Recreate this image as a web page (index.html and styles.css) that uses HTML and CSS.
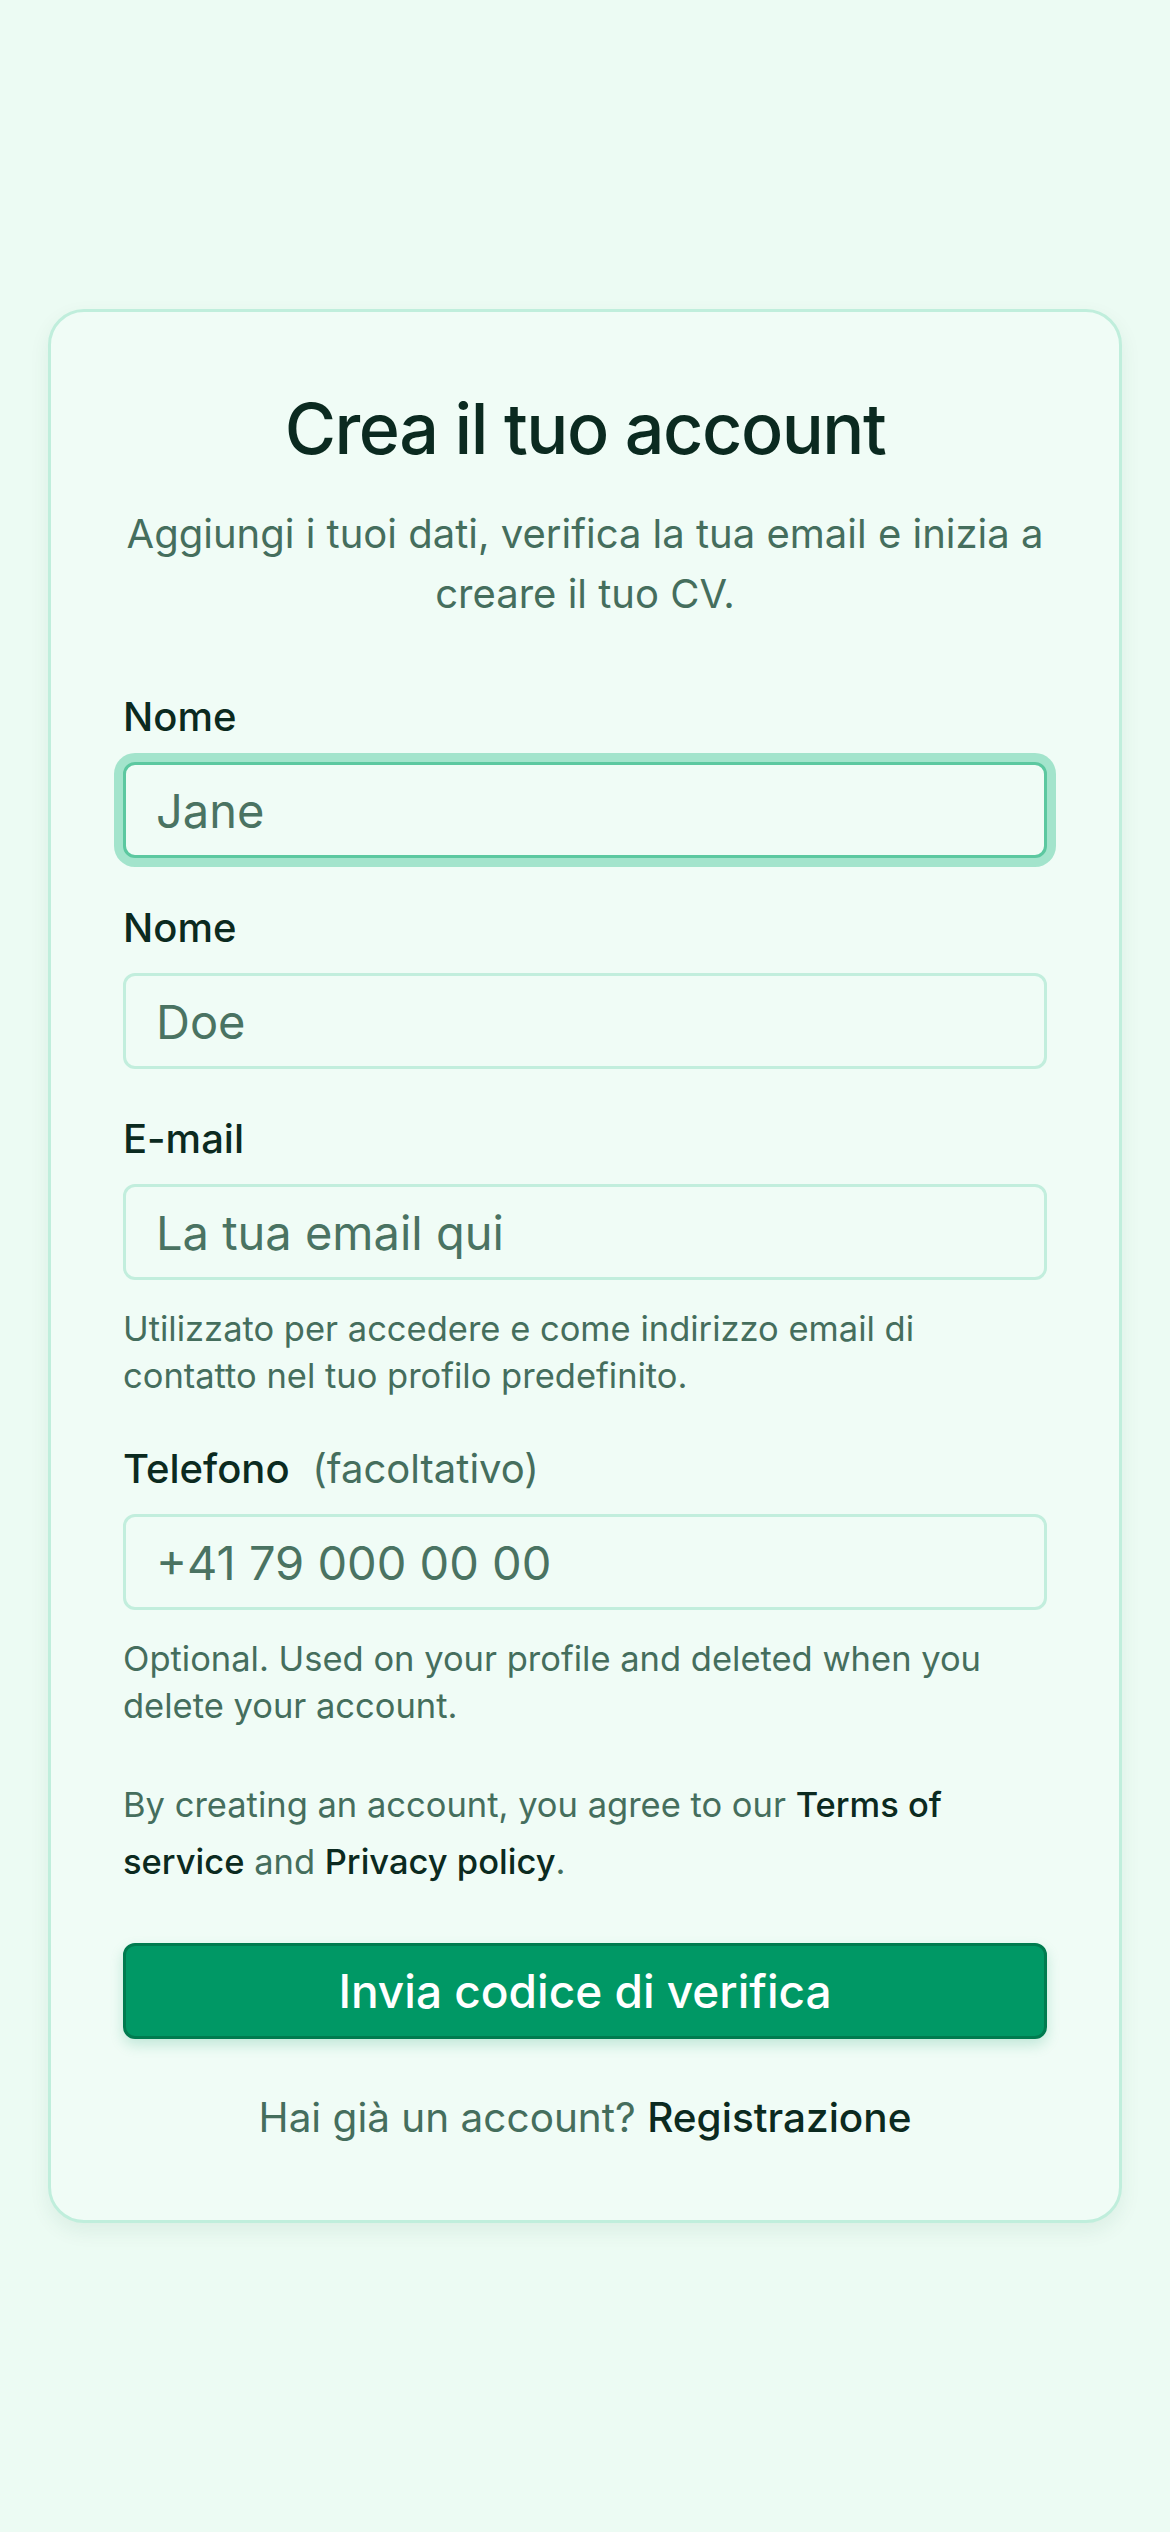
FILE: index.html
```html
<!DOCTYPE html>
<html lang="it">
<head>
  <meta charset="UTF-8" />
  <title>Crea il tuo account</title>
  <link rel="stylesheet" href="styles.css">
</head>

<body>
  <main class="page">
    <section class="card">
      <h1 class="card-title">Crea il tuo account</h1>
      <p class="card-lead">Aggiungi i tuoi dati, verifica la tua email e inizia a creare il tuo CV.</p>

      <form class="signup-form" onsubmit="return false;">
        <div class="field">
          <label class="field-label" for="first-name">Nome</label>
          <input class="field-input is-focused" type="text" id="first-name" placeholder="Jane" />
        </div>

        <div class="field">
          <label class="field-label" for="last-name">Nome</label>
          <input class="field-input" type="text" id="last-name" placeholder="Doe" />
        </div>

        <div class="field">
          <label class="field-label" for="email">E-mail</label>
          <input class="field-input" type="email" id="email" placeholder="La tua email qui" />
          <p class="field-help">Utilizzato per accedere e come indirizzo email di contatto nel tuo profilo predefinito.</p>
        </div>

        <div class="field">
          <label class="field-label" for="phone">Telefono <span class="field-optional">(facoltativo)</span></label>
          <input class="field-input" type="tel" id="phone" placeholder="+41 79 000 00 00" />
          <p class="field-help">Optional. Used on your profile and deleted when you delete your account.</p>
        </div>

        <p class="terms">
          By creating an account, you agree to our <a href="#">Terms of service</a> and <a href="#">Privacy policy</a>.
        </p>

        <button type="submit" class="submit-btn">Invia codice di verifica</button>
      </form>

      <p class="signin">Hai già un account? <a href="#">Registrazione</a></p>
    </section>
  </main>
</body>
</html>
```

FILE: styles.css
```css
/* === Basic Reset === */
* {
  margin: 0;
  padding: 0;
  box-sizing: border-box;
}

body {
  font-family: Inter, 'Noto Sans', sans-serif;
  background: #ecfbf3;
  color: #0b2a20;
}

.page {
  min-height: 100vh;
  display: flex;
  align-items: center;
  justify-content: center;
  padding: 0 48px;
}

.card {
  width: 100%;
  background: #f0fcf6;
  border: 3px solid #c0eedc;
  border-radius: 36px;
  padding: 72px;
  box-shadow: 0 8px 20px rgba(20, 90, 60, 0.08);
}

.card-title {
  font-size: 70px;
  line-height: 90px;
  font-weight: 500;
  letter-spacing: -1.5px;
  text-align: center;
  color: #0b2a20;
}

.card-lead {
  margin-top: 30px;
  font-size: 40px;
  line-height: 60px;
  text-align: center;
  color: #456e5d;
}

.signup-form {
  margin-top: 63px;
}

.field + .field {
  margin-top: 40px;
}

.field-label {
  display: block;
  margin-bottom: 15px;
  font-size: 40px;
  line-height: 60px;
  font-weight: 500;
  color: #0b2a20;
}

.field-optional {
  margin-left: 12px;
  font-weight: 400;
  color: #456e5d;
}

.field-input {
  display: block;
  width: 100%;
  height: 96px;
  padding: 0 30px;
  font-family: inherit;
  font-size: 47px;
  color: #0b2a20;
  background: #f0fcf6;
  border: 3px solid #c2eedd;
  border-radius: 12px;
  outline: none;
}

.field-input::placeholder {
  color: #4a7362;
}

.field-input.is-focused {
  border-color: #5cc8a0;
  box-shadow: 0 0 0 9px #a3e4cc;
}

.field-help {
  margin-top: 25px;
  font-size: 34.5px;
  line-height: 47px;
  color: #456e5d;
}

.terms {
  margin-top: 47px;
  font-size: 34.5px;
  line-height: 57px;
  color: #456e5d;
}

.terms a,
.signin a {
  color: #0b2a20;
  font-weight: 500;
  text-decoration: none;
}

.submit-btn {
  display: block;
  width: 100%;
  height: 96px;
  margin-top: 53px;
  font-family: inherit;
  font-size: 46px;
  font-weight: 500;
  color: #ffffff;
  background: #009865;
  border: 3px solid #007b4f;
  border-radius: 12px;
  box-shadow: 0 6px 14px rgba(0, 152, 101, 0.2);
  cursor: pointer;
}

.signin {
  margin-top: 49px;
  font-size: 40.5px;
  line-height: 60px;
  text-align: center;
  color: #456e5d;
}
```
